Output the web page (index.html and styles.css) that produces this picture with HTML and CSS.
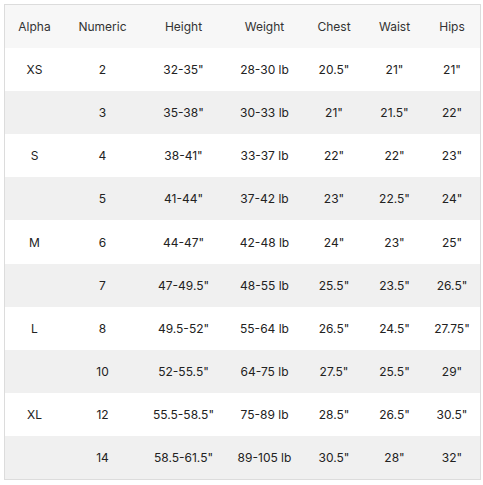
FILE: index.html
```html
<!DOCTYPE html>
<html>
<head>
<meta charset="utf-8">
<link rel="stylesheet" href="styles.css">
</head>
<body>
<div class="wrap">
<table class="size-table">
<colgroup>
<col class="c1"><col class="c2"><col class="c3"><col class="c4"><col class="c5"><col class="c6"><col class="c7">
</colgroup>
<thead>
<tr><th>Alpha</th><th>Numeric</th><th>Height</th><th>Weight</th><th>Chest</th><th>Waist</th><th>Hips</th></tr>
</thead>
<tbody>
<tr><td>XS</td><td>2</td><td>32-35"</td><td>28-30 lb</td><td>20.5"</td><td>21"</td><td>21"</td></tr>
<tr><td></td><td>3</td><td>35-38"</td><td>30-33 lb</td><td>21"</td><td>21.5"</td><td>22"</td></tr>
<tr><td>S</td><td>4</td><td>38-41"</td><td>33-37 lb</td><td>22"</td><td>22"</td><td>23"</td></tr>
<tr><td></td><td>5</td><td>41-44"</td><td>37-42 lb</td><td>23"</td><td>22.5"</td><td>24"</td></tr>
<tr><td>M</td><td>6</td><td>44-47"</td><td>42-48 lb</td><td>24"</td><td>23"</td><td>25"</td></tr>
<tr><td></td><td>7</td><td>47-49.5"</td><td>48-55 lb</td><td>25.5"</td><td>23.5"</td><td>26.5"</td></tr>
<tr><td>L</td><td>8</td><td>49.5-52"</td><td>55-64 lb</td><td>26.5"</td><td>24.5"</td><td>27.75"</td></tr>
<tr><td></td><td>10</td><td>52-55.5"</td><td>64-75 lb</td><td>27.5"</td><td>25.5"</td><td>29"</td></tr>
<tr><td>XL</td><td>12</td><td>55.5-58.5"</td><td>75-89 lb</td><td>28.5"</td><td>26.5"</td><td>30.5"</td></tr>
<tr><td></td><td>14</td><td>58.5-61.5"</td><td>89-105 lb</td><td>30.5"</td><td>28"</td><td>32"</td></tr>
</tbody>
</table>
</div>
</body>
</html>
```
FILE: styles.css
```css
html, body {
  margin: 0;
  padding: 0;
  background: #ffffff;
}
.wrap {
  padding: 4px;
}
.size-table {
  width: 477px;
  border: 1px solid #dcdcdc;
  border-collapse: separate;
  border-spacing: 0;
  table-layout: fixed;
  font-family: Inter, "Noto Sans", sans-serif;
  font-size: 12px;
  color: #222222;
}
.c1 { width: 59px; }
.c2 { width: 77px; }
.c3 { width: 85px; }
.c4 { width: 77px; }
.c5 { width: 62px; }
.c6 { width: 59px; }
.c7 { width: 56px; }
.size-table th,
.size-table td {
  padding: 0;
  height: 43.1px;
  text-align: center;
  vertical-align: middle;
  font-weight: 400;
  white-space: nowrap;
}
.size-table thead th {
  background: #f7f7f7;
  color: #333333;
}
.size-table tbody tr:nth-child(even) td {
  background: #f0f0f0;
}
```
